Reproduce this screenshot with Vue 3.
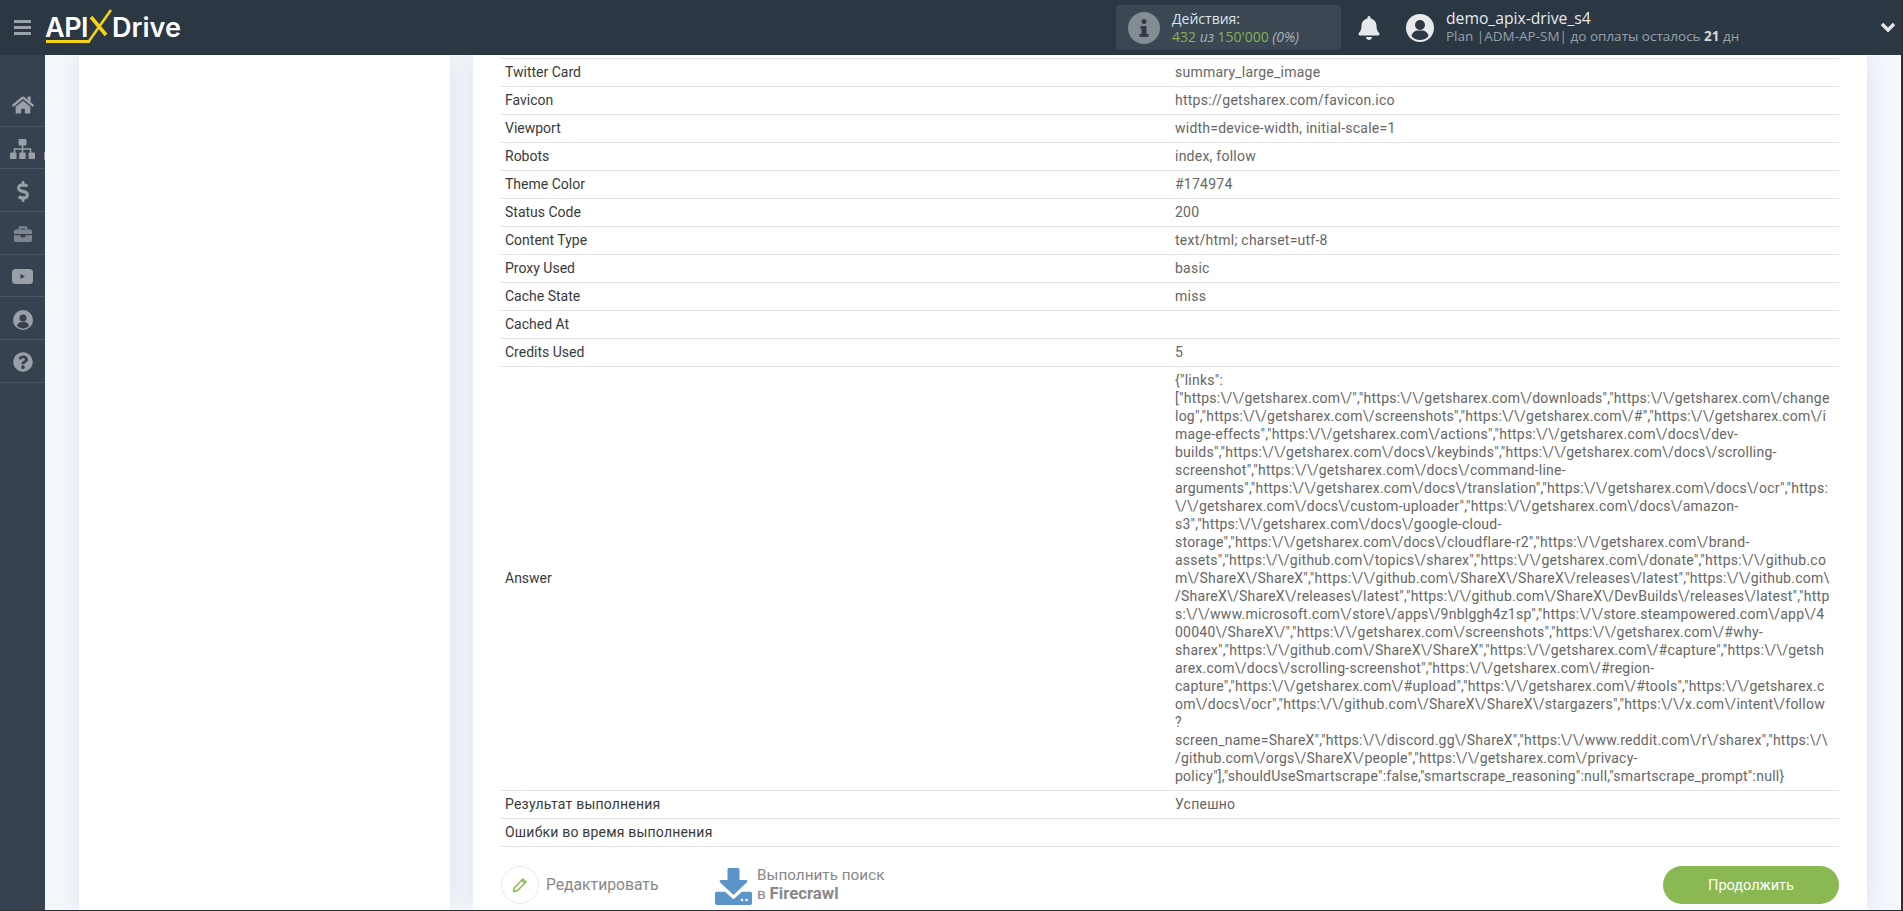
<script setup>
const answer = [
  '{"links":',
  '["https:\\/\\/getsharex.com\\/","https:\\/\\/getsharex.com\\/downloads","https:\\/\\/getsharex.com\\/change',
  'log","https:\\/\\/getsharex.com\\/screenshots","https:\\/\\/getsharex.com\\/#","https:\\/\\/getsharex.com\\/i',
  'mage-effects","https:\\/\\/getsharex.com\\/actions","https:\\/\\/getsharex.com\\/docs\\/dev-',
  'builds","https:\\/\\/getsharex.com\\/docs\\/keybinds","https:\\/\\/getsharex.com\\/docs\\/scrolling-',
  'screenshot","https:\\/\\/getsharex.com\\/docs\\/command-line-',
  'arguments","https:\\/\\/getsharex.com\\/docs\\/translation","https:\\/\\/getsharex.com\\/docs\\/ocr","https:',
  '\\/\\/getsharex.com\\/docs\\/custom-uploader","https:\\/\\/getsharex.com\\/docs\\/amazon-',
  's3","https:\\/\\/getsharex.com\\/docs\\/google-cloud-',
  'storage","https:\\/\\/getsharex.com\\/docs\\/cloudflare-r2","https:\\/\\/getsharex.com\\/brand-',
  'assets","https:\\/\\/github.com\\/topics\\/sharex","https:\\/\\/getsharex.com\\/donate","https:\\/\\/github.co',
  'm\\/ShareX\\/ShareX","https:\\/\\/github.com\\/ShareX\\/ShareX\\/releases\\/latest","https:\\/\\/github.com\\',
  '/ShareX\\/ShareX\\/releases\\/latest","https:\\/\\/github.com\\/ShareX\\/DevBuilds\\/releases\\/latest","http',
  's:\\/\\/www.microsoft.com\\/store\\/apps\\/9nblggh4z1sp","https:\\/\\/store.steampowered.com\\/app\\/4',
  '00040\\/ShareX\\/","https:\\/\\/getsharex.com\\/screenshots","https:\\/\\/getsharex.com\\/#why-',
  'sharex","https:\\/\\/github.com\\/ShareX\\/ShareX","https:\\/\\/getsharex.com\\/#capture","https:\\/\\/getsh',
  'arex.com\\/docs\\/scrolling-screenshot","https:\\/\\/getsharex.com\\/#region-',
  'capture","https:\\/\\/getsharex.com\\/#upload","https:\\/\\/getsharex.com\\/#tools","https:\\/\\/getsharex.c',
  'om\\/docs\\/ocr","https:\\/\\/github.com\\/ShareX\\/ShareX\\/stargazers","https:\\/\\/x.com\\/intent\\/follow',
  '?',
  'screen_name=ShareX","https:\\/\\/discord.gg\\/ShareX","https:\\/\\/www.reddit.com\\/r\\/sharex","https:\\/\\',
  '/github.com\\/orgs\\/ShareX\\/people","https:\\/\\/getsharex.com\\/privacy-',
  'policy"],"shouldUseSmartscrape":false,"smartscrape_reasoning":null,"smartscrape_prompt":null}',
].join('\n')

const rows = [
  ['Twitter Card', 'summary_large_image'],
  ['Favicon', 'https://getsharex.com/favicon.ico'],
  ['Viewport', 'width=device-width, initial-scale=1'],
  ['Robots', 'index, follow'],
  ['Theme Color', '#174974'],
  ['Status Code', '200'],
  ['Content Type', 'text/html; charset=utf-8'],
  ['Proxy Used', 'basic'],
  ['Cache State', 'miss'],
  ['Cached At', ''],
  ['Credits Used', '5'],
  ['Answer', answer],
  ['Результат выполнения', 'Успешно', 'cyr'],
  ['Ошибки во время выполнения', '', 'cyr'],
]
</script>

<template>
  <div class="page">
    <header class="topbar">
      <div class="brand">
        <svg class="burger" width="17" height="15" viewBox="0 0 17 15"><path d="M0 0h17v3H0zM0 6h17v3H0zM0 12h17v3H0z" fill="#99a1a9"/></svg>
        <div class="logo">
          <span class="logo-api">API</span>
          <svg class="logo-x" width="24" height="33" viewBox="0 0 24 33">
            <path d="M3 8 L18 26" stroke="#f5d416" stroke-width="3.600" fill="none"/>
            <path d="M23 1 L1 32" stroke="#f5d416" stroke-width="2.600" fill="none"/>
          </svg>
          <span class="logo-drive">Drive</span>
          <i class="logo-line"></i>
        </div>
      </div>
      <div class="actions">
        <svg class="info" width="32" height="32" viewBox="0 0 32 32">
          <circle cx="16" cy="16" r="16" fill="#838c93"/>
          <circle cx="16" cy="9.500" r="2.500" fill="#2f3b47"/>
          <path d="M12.500 14h6v8h2v3h-9v-3h2v-5h-1z" fill="#2f3b47"/>
        </svg>
        <div class="actions-text">
          <div class="actions-title">Действия:</div>
          <div class="actions-count"><b>432</b> <em>из</em> <b>150'000</b> <em>(0%)</em></div>
        </div>
      </div>
      <svg class="bell" width="22" height="24" viewBox="0 0 448 512"><path fill="#e6e8ea" d="M224 512c35 0 64-29 64-64H160c0 35 29 64 64 64zm215-150c-19-21-55-52-55-154 0-78-54-140-128-155V32a32 32 0 1 0-64 0v21C118 68 64 130 64 208c0 102-36 133-55 154-6 6-9 14-9 22 0 16 13 32 32 32h384c19 0 32-16 32-32 0-8-3-16-9-22z"/></svg>
      <svg class="avatar" width="28" height="28" viewBox="0 0 28 28">
        <circle cx="14" cy="14" r="14" fill="#e8e9ea"/>
        <circle cx="14" cy="11" r="5" fill="#2d3845"/>
        <path d="M5.500 22c1-4 4-5.500 6-5.500h5c2 0 5 1.500 6 5.500-2 2.500-5 4-8.500 4s-6.500-1.500-8.500-4z" fill="#2d3845"/>
      </svg>
      <div class="user">
        <div class="user-name">demo_apix-drive_s4</div>
        <div class="user-plan">Plan |ADM-AP-SM| до оплаты осталось <b>21</b> дн</div>
      </div>
      <svg class="chevron" width="16" height="11" viewBox="0 0 16 11"><path d="M2 2l6 6 6-6" fill="none" stroke="#e6e8ea" stroke-width="3.400"/></svg>
    </header>

    <div class="body">
      <nav class="sidebar">
        <a class="nav-item home">
          <svg width="22" height="20" viewBox="0 0 576 512"><path fill="#99a0a8" d="M280 148 96 300v162c0 9 7 16 16 16l112-1c9 0 16-7 16-16v-94c0-9 7-16 16-16h64c9 0 16 7 16 16v94c0 9 7 16 16 16l112 1c9 0 16-7 16-16V300L296 148c-4-4-12-4-16 0zm292 103-84-69V44c0-7-5-12-12-12h-56c-7 0-12 5-12 12v73l-90-74a48 48 0 0 0-61 0L4 251c-5 4-6 12-2 17l26 31c4 5 12 6 17 2L280 107c4-4 12-4 16 0l235 194c5 4 13 3 17-2l26-31c4-5 3-13-2-17z"/></svg>
        </a>
        <a class="nav-item">
          <svg width="25" height="20" viewBox="0 0 25 20" fill="#99a0a8"><rect x="8.500" y="0" width="8" height="6.500" rx="1"/><rect x="0" y="13.500" width="6.500" height="6.500" rx="1"/><rect x="9.200" y="13.500" width="6.500" height="6.500" rx="1"/><rect x="18.500" y="13.500" width="6.500" height="6.500" rx="1"/><path d="M11.700 6h1.600v3.200h8v4.500h-1.600v-3h-6.400v3h-1.600v-3H5.300v3H3.700V9.200h8z"/></svg>
        </a>
        <a class="nav-item">
          <svg width="12" height="21" viewBox="0 0 288 512"><path fill="#99a0a8" d="M209 233 97 200c-13-4-22-16-22-29 0-17 14-30 31-30h69c13 0 25 4 35 11 6 4 14 3 19-2l36-35c7-7 6-19-2-25-25-20-57-31-88-31V16c0-9-7-16-16-16h-32c-9 0-16 7-16 16v43h-3C45 59-9 115 1 185c6 46 42 83 87 96l103 30c13 4 22 16 22 29 0 17-14 30-31 30h-69c-13 0-25-4-35-11-6-4-14-3-19 2l-36 35c-7 7-6 19 2 25 25 20 57 31 88 31v48c0 9 7 16 16 16h32c9 0 16-7 16-16v-48c47-1 90-29 105-73 22-62-15-129-73-146z"/></svg>
        </a>
        <a class="nav-item">
          <svg width="20" height="18" viewBox="0 0 512 512"><path fill="#7d8590" d="M320 336c0 9-7 16-16 16h-96c-9 0-16-7-16-16v-48H0v144c0 26 22 48 48 48h416c26 0 48-22 48-48V288H320v48zm144-208h-80V80c0-26-22-48-48-48H176c-26 0-48 22-48 48v48H48c-26 0-48 22-48 48v80h512v-80c0-26-22-48-48-48zm-144 0H192V96h128v32z"/></svg>
        </a>
        <a class="nav-item">
          <svg width="21" height="15" viewBox="0 0 21 15"><rect width="21" height="15" rx="3.500" fill="#99a0a8"/><path d="M8.500 5l4.500 2.500-4.500 2.500z" fill="#36424f"/></svg>
        </a>
        <a class="nav-item">
          <svg width="20" height="20" viewBox="0 0 20 20"><circle cx="10" cy="10" r="10" fill="#99a0a8"/><circle cx="10" cy="8" r="3.500" fill="#36424f"/><path d="M4 15.700c.8-2.700 2.800-3.700 4.200-3.700h3.600c1.400 0 3.400 1 4.200 3.700-1.500 1.800-3.600 2.800-6 2.800s-4.500-1-6-2.800z" fill="#36424f"/></svg>
        </a>
        <a class="nav-item">
          <svg width="20" height="20" viewBox="0 0 512 512"><path fill="#99a0a8" d="M504 256c0 137-111 248-248 248S8 393 8 256 119 8 256 8s248 111 248 248zM263 90c-54 0-89 23-116 64-4 5-3 12 3 16l35 26c5 4 13 3 17-2 18-23 30-36 58-36 21 0 46 13 46 33 0 15-12 23-33 34-23 14-54 31-54 73v4c0 7 5 12 12 12h56c7 0 12-5 12-12v-1c0-29 85-30 85-109 0-59-62-102-121-102zm-7 252a47 47 0 1 0 0 94 47 47 0 0 0 0-94z"/></svg>
        </a>
        <i class="nav-tick"></i>
      </nav>

      <aside class="side-panel"></aside>

      <main class="panel">
        <div class="table">
          <div v-for="row in rows" :key="row[0]" class="row">
            <div class="cell label" :class="row[2]">{{ row[0] }}</div>
            <div class="cell value">{{ row[1] }}</div>
          </div>
        </div>
        <div class="footer">
          <div class="footer-left">
            <a class="edit">
              <span class="edit-circle">
                <svg width="18" height="18" viewBox="0 0 18 18"><path d="M3.500 11.500 12 3l3 3-8.500 8.500L2.500 15.500z M10.800 4.200l3 3" fill="none" stroke="#8ab852" stroke-width="1.500" stroke-linejoin="round"/></svg>
              </span>
              <span class="edit-text">Редактировать</span>
            </a>
            <a class="run">
              <svg width="37" height="37" viewBox="0 0 37 37">
                <path d="M14 0h9a1.500 1.500 0 0 1 1.500 1.500V12h6.500c1.200 0 1.800 1.400 1 2.300L18.500 27 5 14.300c-.9-.9-.2-2.300 1-2.300h6.500V1.500A1.500 1.500 0 0 1 14 0z" fill="#5b94c8"/>
                <path d="M0 25.500C0 24.500.8 23.700 1.800 23.700H10l8.500 7.500 8.500-7.500h8.200c1 0 1.800.8 1.800 1.800V35a2 2 0 0 1-2 2H2a2 2 0 0 1-2-2z" fill="#5b94c8"/>
                <circle cx="27" cy="32" r="1.300" fill="#fff"/><circle cx="31.500" cy="32" r="1.300" fill="#fff"/>
              </svg>
              <span class="run-text">Выполнить поиск<br>в <b>Firecrawl</b></span>
            </a>
          </div>
          <button class="continue" type="button">Продолжить</button>
        </div>
      </main>
    </div>
  </div>
</template>

<style>
html, body { margin: 0; padding: 0; overflow: hidden; background: #fff; }
</style>

<style scoped>
.page {
  width: 1901px;
  height: 910px;
  overflow: hidden;
  display: flex;
  flex-direction: column;
  background: #f4f7fc;
  border-right: 2px solid #2b2f36;
  border-bottom: 1px solid #2b2f36;
  font-family: Roboto, "Liberation Sans", sans-serif;
}
.topbar {
  flex: none;
  height: 55px;
  background: #2c3744;
  display: flex;
  align-items: center;
  position: relative;
  z-index: 2;
  font-family: "Open Sans", "Noto Sans", sans-serif;
}
.brand { display: flex; align-items: center; width: 1116px; padding-left: 14px; box-sizing: border-box; }
.burger { flex: none; }
.logo {
  margin-left: 14px;
  position: relative;
  display: flex;
  align-items: center;
  height: 36px;
  color: #fff;
  font-family: Inter, "Open Sans", sans-serif;
  font-weight: 600;
  font-size: 27px;
  letter-spacing: -0.5px;
}
.logo-x { margin: -4px 0 0 0; }
.logo-drive { letter-spacing: 0; }
.logo-line { position: absolute; left: 1px; top: 30px; width: 44px; height: 3px; background: #f5d416; }
.actions {
  width: 225px;
  height: 45px;
  flex: none;
  box-sizing: border-box;
  background: #3b4854;
  border-radius: 4px;
  display: flex;
  align-items: center;
  padding-left: 12px;
}
.actions-text { margin-left: 12px; font-size: 14px; line-height: 18px; }
.actions-title { color: #dfe2e5; }
.actions-count b { font-weight: 400; color: #86b04f; }
.actions-count em { color: #a9b0b6; }
.bell { flex: none; margin-left: 17px; }
.avatar { flex: none; margin-left: 26px; }
.user { margin-left: 12px; width: 426px; flex: none; }
.user-name { color: #e8eaec; font-size: 15.700px; line-height: 18px; margin-top: -1px; }
.user-plan { color: #97a1aa; font-size: 13.500px; line-height: 18px; }
.user-plan b { color: #d6d9dc; }
.chevron { flex: none; margin-left: 8px; }

.body { flex: 1; min-height: 0; display: flex; align-items: stretch; }
.sidebar {
  flex: none;
  width: 45px;
  background: #36424f;
  padding-top: 29px;
  box-sizing: border-box;
  position: relative;
}
.nav-item {
  display: flex;
  align-items: center;
  justify-content: center;
  height: 42.670px;
  box-sizing: border-box;
  border-bottom: 1px solid #4a5562;
  padding-top: 3px;
}
.nav-item.home { padding-top: 0; }
.nav-tick { position: absolute; right: 0; top: 97px; width: 1px; height: 8px; background: #8e959d; }
.side-panel {
  flex: none;
  width: 371px;
  margin-left: 34px;
  background: #fff;
  box-shadow: 0 0 22px rgba(60, 70, 100, 0.12);
}
.panel {
  flex: none;
  width: 1394px;
  margin-left: 23px;
  box-sizing: border-box;
  padding: 3px 28px 0;
  background: #fff;
  box-shadow: 0 0 22px rgba(60, 70, 100, 0.12);
}
.table { border-top: 1px solid #e3e3e3; }
.row {
  display: grid;
  grid-template-columns: 50% 50%;
  align-items: center;
  border-bottom: 1px solid #e3e3e3;
  font-size: 14px;
  line-height: 18px;
}
.cell { padding: 4px 5px 5px; min-height: 18px; }
.label { color: #3a3a3a; padding-left: 4px; }
.label.cyr { letter-spacing: 0.2px; }
.value { color: #666; white-space: pre; min-width: 0; letter-spacing: 0.24px; }
.footer {
  display: flex;
  justify-content: space-between;
  align-items: flex-start;
  margin-top: 19px;
}
.footer-left { display: flex; align-items: flex-start; }
.edit {
  display: flex;
  align-items: center;
  color: #888;
  font-size: 15.700px;
  width: 212px;
}
.edit-text { margin-top: -2px; }
.edit-circle {
  width: 38px;
  height: 38px;
  box-sizing: border-box;
  border: 1.500px solid #e6eceb;
  border-radius: 50%;
  display: flex;
  align-items: center;
  justify-content: center;
  margin-right: 7px;
}
.run { display: flex; align-items: flex-start; color: #888; font-size: 15.300px; line-height: 18px; }
.run svg { flex: none; margin: 2px 0 0 2px; }
.run-text { margin-left: 5px; }
.run-text b { font-weight: 700; font-size: 16.800px; }
.continue {
  width: 176px;
  height: 38px;
  border: 0;
  border-radius: 19px;
  background: #8ab852;
  color: #fff;
  font-family: Roboto, "Liberation Sans", sans-serif;
  font-weight: 400;
  font-size: 14.500px;
}
</style>
